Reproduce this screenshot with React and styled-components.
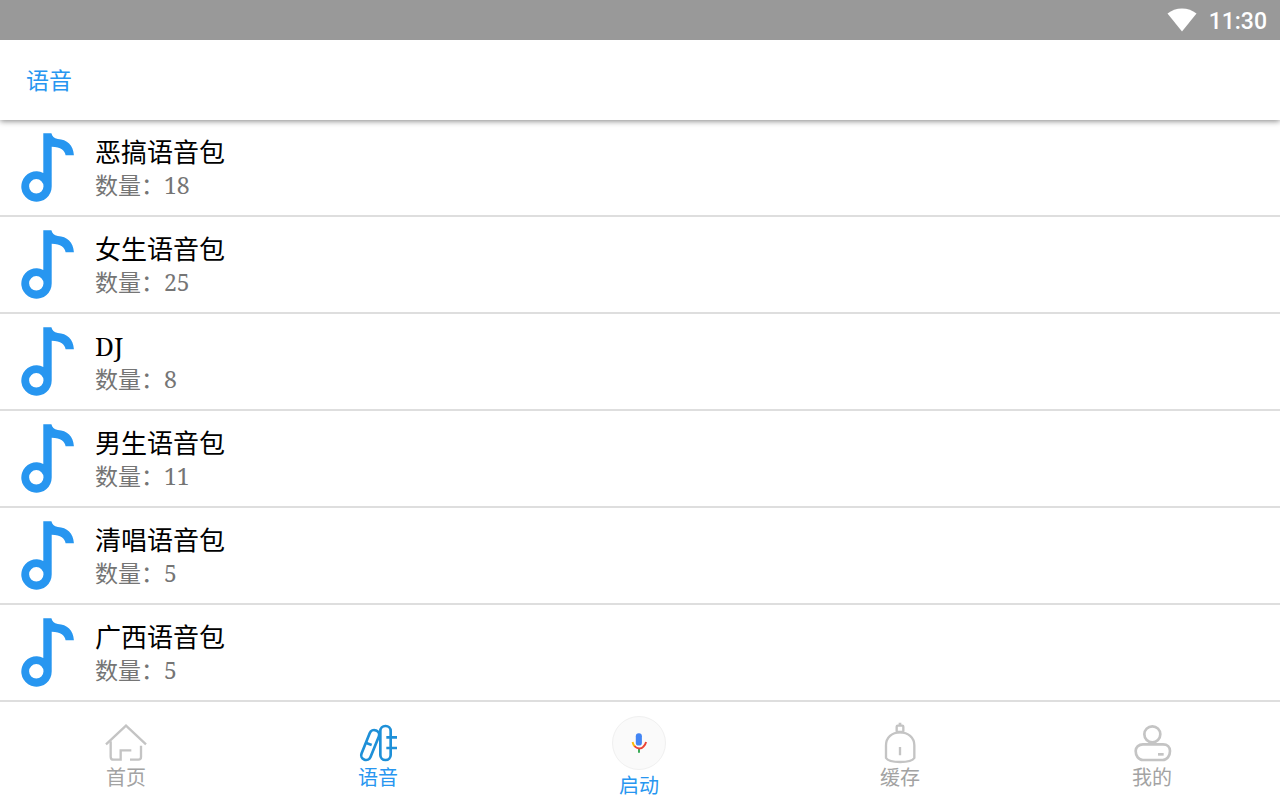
import React, { useState } from 'react';
import styled, { createGlobalStyle } from 'styled-components';

const packs = [
  { name: '恶搞语音包', count: 18 },
  { name: '女生语音包', count: 25 },
  { name: 'DJ', count: 8 },
  { name: '男生语音包', count: 11 },
  { name: '清唱语音包', count: 5 },
  { name: '广西语音包', count: 5 },
];

function WifiIcon() {
  return (
    <svg width="30" height="24" viewBox="0 0 30 24" aria-hidden="true">
      <path d="M15 23.500 0.500 5.600C4.500 2.300 9.500 0.500 15 0.500s10.500 1.800 14.500 5.100z" fill="#fff" />
    </svg>
  );
}

function NoteIcon() {
  return (
    <svg width="54" height="71" viewBox="0 0 54 71" aria-hidden="true">
      <path
        fill="#2796f0"
        fillRule="evenodd"
        d="M23.300 1.300h8.100c.6 3 2.600 5.200 6.400 5.800 9.200.4 15.600 6.200 16.100 16.200h-8.300c-.8-5-4.600-8.200-13.900-8.600V54.300a15.200 15.200 0 1 1-8.400-13.400zM16.300 47.100a7.200 7.200 0 1 0 0 14.400 7.200 7.200 0 0 0 0-14.400z"
      />
    </svg>
  );
}

function HomeIcon() {
  return (
    <NavSvg viewBox="0 0 126 126">
      <path d="M3 67 63 11l60 56" />
      <path d="M17 58v46q0 9 9 9h21V85h32" />
      <path d="M108 71v34q0 8-8 8H75" />
    </NavSvg>
  );
}

function VoiceIcon() {
  return (
    <NavSvg viewBox="0 0 126 126" $width={8}>
      <rect x="70" y="12" width="31" height="102" rx="15" />
      <path d="M88 46h32M88 78h32" />
      <rect x="25" y="22" width="29" height="94" rx="14" transform="rotate(22 39 69)" />
      <path d="m28 63 16 6" />
    </NavSvg>
  );
}

function CacheIcon() {
  return (
    <NavSvg viewBox="0 0 126 126">
      <path d="M21 108V70c0-24 18-39 42-39s43 15 43 39v38c-10 16-75 16-85 0z" />
      <rect x="53" y="11" width="20" height="19" rx="3" />
      <path d="M59 6h8M63 75v25" />
    </NavSvg>
  );
}

function MineIcon() {
  return (
    <NavSvg viewBox="0 0 126 126" $width={8}>
      <circle cx="64" cy="37" r="24" />
      <path d="M36 67h60c13 0 21 9 21 20 0 15-9 27-22 27H36c-13 0-22-12-22-27 0-11 9-20 22-20z" />
      <path d="M81 97h17" />
    </NavSvg>
  );
}

function MicIcon() {
  return (
    <svg width="54" height="54" viewBox="0 0 162 162" aria-hidden="true">
      <rect x="71" y="51" width="19" height="38" rx="9" fill="#4285f4" />
      <g fill="none" strokeWidth="6">
        <path d="M81 98v13" stroke="#34a853" />
        <path d="M61 78c1 5 3 10 7 14" stroke="#fbbc05" />
        <path d="M67 91c8 9 21 9 28 1 4-4 7-9 8-14" stroke="#ea4335" />
      </g>
    </svg>
  );
}

const tabs = [
  { id: 'home', label: '首页', Icon: HomeIcon },
  { id: 'voice', label: '语音', Icon: VoiceIcon },
  { id: 'start', label: '启动', Icon: MicIcon, main: true },
  { id: 'cache', label: '缓存', Icon: CacheIcon },
  { id: 'mine', label: '我的', Icon: MineIcon },
];

function PackItem({ name, count }) {
  return (
    <PackRow>
      <NoteIcon />
      <PackText>
        <PackName>{name}</PackName>
        <PackCount>{`数量：${count}`}</PackCount>
      </PackText>
    </PackRow>
  );
}

function App() {
  const [active, setActive] = useState('voice');
  return (
    <>
      <GlobalStyle />
      <Page>
        <StatusBar>
          <WifiIcon />
          <Clock>11:30</Clock>
        </StatusBar>
        <AppBar>
          <AppTitle>语音</AppTitle>
        </AppBar>
        <PackList>
          {packs.map((pack) => (
            <PackItem key={pack.name} name={pack.name} count={pack.count} />
          ))}
        </PackList>
        <BottomNav>
          {tabs.map(({ id, label, Icon, main }) => (
            <NavButton
              key={id}
              type="button"
              $main={main}
              $active={main || id === active}
              onClick={() => setActive(id)}
            >
              {main ? <MicCircle><Icon /></MicCircle> : <Icon />}
              <NavLabel $active={main || id === active}>{label}</NavLabel>
            </NavButton>
          ))}
        </BottomNav>
      </Page>
    </>
  );
}

const GlobalStyle = createGlobalStyle`
  * {
    box-sizing: border-box;
  }
  body {
    margin: 0;
    background: #fff;
    font-family: 'Noto Serif', 'Liberation Serif', 'Noto Sans CJK SC', serif;
  }
`;

const Page = styled.div`
  display: flex;
  flex-direction: column;
  min-height: 100vh;
`;

const StatusBar = styled.div`
  position: relative;
  z-index: 2;
  display: flex;
  align-items: center;
  justify-content: flex-end;
  gap: 12px;
  height: 40px;
  padding: 0 13px;
  background: #999;
`;

const Clock = styled.span`
  padding-top: 3px;
  color: #fff;
  font: 500 23px/32px Roboto, sans-serif;
`;

const AppBar = styled.header`
  position: relative;
  z-index: 1;
  display: flex;
  align-items: center;
  height: 80px;
  padding: 0 26px;
  background: #fff;
  box-shadow: 0 1px 6px rgba(0, 0, 0, 0.5);
`;

const AppTitle = styled.h1`
  margin: 0;
  color: #2796f0;
  font-size: 23px;
  font-weight: 400;
  line-height: 34px;
`;

const PackList = styled.ul`
  flex: 1;
  margin: 0;
  padding: 0;
  list-style: none;
`;

const PackRow = styled.li`
  display: flex;
  gap: 21px;
  padding: 12px 20px;
  border-bottom: 2px solid #dedede;
`;

const PackText = styled.div`
  padding-top: 3px;
`;

const PackName = styled.div`
  color: #000;
  font-size: 26px;
  line-height: 34px;
`;

const PackCount = styled.div`
  color: #757575;
  font-size: 23px;
  line-height: 32px;
`;

const BottomNav = styled.nav`
  display: flex;
  height: 98px;
  padding-right: 2px;
  background: #fff;
`;

const NavButton = styled.button`
  display: flex;
  flex: ${({ $main }) => ($main ? 15 : 14)} 1 0;
  flex-direction: column;
  align-items: center;
  gap: ${({ $main }) => ($main ? '2px' : '0')};
  padding: ${({ $main }) => ($main ? '14px' : '20px')} 0 0;
  border: 0;
  background: none;
  color: ${({ $active }) => ($active ? '#1e90d8' : '#c4c4c4')};
  font-family: inherit;
  cursor: pointer;
`;

const NavSvg = styled.svg.attrs({ 'aria-hidden': true })`
  width: 42px;
  height: 42px;
  fill: none;
  stroke: currentColor;
  stroke-width: ${({ $width = 7 }) => $width};
`;

const MicCircle = styled.span`
  display: flex;
  align-items: center;
  justify-content: center;
  width: 54px;
  height: 54px;
  border: 1px solid #f0f0f0;
  border-radius: 50%;
  background: #fafafa;
`;

const NavLabel = styled.span`
  color: ${({ $active }) => ($active ? '#2796f0' : '#a3a3a3')};
  font-size: 20px;
  line-height: 28px;
`;

export default App;
